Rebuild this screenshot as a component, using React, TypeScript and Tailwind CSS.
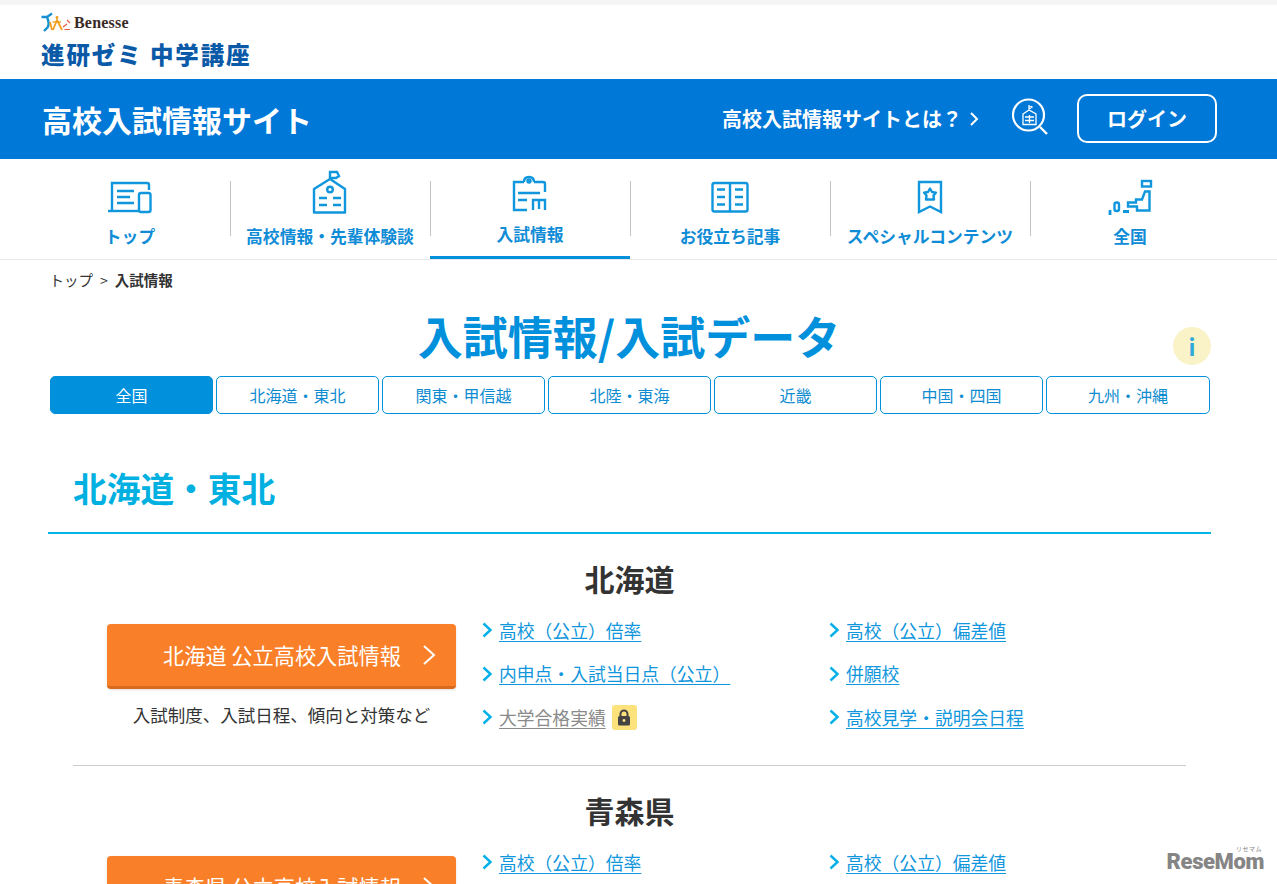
const FONT = "font-['Noto_Sans_CJK_JP','Noto_Sans',sans-serif]"

const tabs = ['全国', '北海道・東北', '関東・甲信越', '北陸・東海', '近畿', '中国・四国', '九州・沖縄']

function TopIcon() {
  return (
    <svg viewBox="106 179 48 36" className="w-[48px] h-[36px] fill-none stroke-[#0f96dc] stroke-[2.4]">
      <path d="M112 211V183H147Q149 183 149 185V190" />
      <path d="M108 211H139" />
      <rect x="139" y="193" width="11.5" height="19" rx="2" />
      <path d="M117 191H134M117 197H130M117 203H134" />
    </svg>
  )
}

function SchoolIcon() {
  return (
    <svg viewBox="310 170 40 45" className="w-[40px] h-[45px] fill-none stroke-[#0f96dc] stroke-[2.4]">
      <path d="M314 189L330 179L345 189V212.5H314Z" strokeLinejoin="round" />
      <path d="M330 179V172H337L339 176L336 178H330" />
      <circle cx="330" cy="189.5" r="2.8" />
      <path d="M319 198H327M333 198H341M319 205H327M333 205H341" />
    </svg>
  )
}

function ExamIcon() {
  return (
    <svg viewBox="510 174 40 41" className="w-[40px] h-[41px] fill-none stroke-[#0f96dc] stroke-[2.4]">
      <path d="M527 210H514V182H524M534 182H543Q545 182 545 184V192" />
      <path d="M524 182Q524 177 529 177Q534 177 534 182" />
      <circle cx="529" cy="181" r="1.500" />
      <path d="M518 193H540M518 200H527M533 210V200H545V210M539 200V209" />
    </svg>
  )
}

function BookIcon() {
  return (
    <svg viewBox="708 179 44 36" className="w-[44px] h-[36px] fill-none stroke-[#0f96dc] stroke-[2.4]">
      <rect x="712.5" y="183" width="35" height="28.5" rx="2" />
      <path d="M730 183V212M717 189.5H725M717 197H725M717 204.5H725M735 189.5H743M735 197H743M735 204.5H743" />
    </svg>
  )
}

function BookmarkIcon() {
  return (
    <svg viewBox="914 177 32 38" className="w-[32px] h-[38px] fill-none stroke-[#0f96dc] stroke-[2.4]">
      <path d="M919 182H941V212L930 206.5L919 212Z" />
      <path d="M930 188.500L932 192L936 192.600L933.500 195.600L934 199.500H926L926.500 195.600L924 192.600L928 192Z" strokeLinejoin="round" />
    </svg>
  )
}

function JapanIcon() {
  return (
    <svg viewBox="1106 177 48 38" className="w-[48px] h-[38px] fill-none stroke-[#0f96dc] stroke-[2.4]">
      <rect x="1142" y="181" width="9" height="5.500" />
      <path d="M1145 191.500H1149.500V210.500H1137V206.500H1128V202.500H1136V199.500H1142L1145 191.500Z" />
      <rect x="1114.500" y="202.500" width="4.500" height="8.500" rx="2" />
      <path d="M1123 211.500H1129M1110 210V215" strokeWidth="2.800" />
    </svg>
  )
}

function FinderIcon() {
  return (
    <svg viewBox="1010 97 40 44" className="w-[40px] h-[44px] fill-none stroke-white">
      <circle cx="1028.500" cy="115" r="15.500" strokeWidth="2.200" />
      <path d="M1040 127L1047 134" strokeWidth="2.400" />
      <path d="M1029 105V110M1029 105.500L1032 107L1029 109M1023 114L1029 110L1036 114V124.500H1023ZM1025 117H1034M1025 120.500H1034M1029.500 115V123" strokeWidth="1.300" />
    </svg>
  )
}

function BenesseMark() {
  return (
    <svg viewBox="0 0 30 20" className="w-[30px] h-[20px] fill-none">
      <path d="M0.500 5H6L11 1.500M6 5Q9 12 6.500 15.500L3 19" stroke="#1590d0" strokeWidth="2.400" />
      <path d="M9 10L11 18M12 18L16 8L21 18" stroke="#f0a020" strokeWidth="1.800" />
      <path d="M11.500 10H20" stroke="#f0a020" strokeWidth="1.400" />
      <circle cx="16" cy="5.500" r="1.400" fill="#f0a020" />
      <path d="M22 15L26 12M23.500 17.500H29M26 8L29 11" stroke="#e85a40" strokeWidth="1.200" />
    </svg>
  )
}

function LockBadge() {
  return (
    <span className="ml-[6px] w-[25px] h-[25px] rounded-[3px] bg-[#fbe27a] flex items-center justify-center">
      <svg viewBox="0 0 14 17" className="w-[14px] h-[17px]">
        <path d="M3.500 7V5A3.500 3.500 0 0 1 10.500 5V7" fill="none" stroke="#444" strokeWidth="2" />
        <rect x="1" y="7" width="12" height="9.500" rx="1.500" fill="#444" />
        <circle cx="7" cy="11.500" r="1.400" fill="#fbe27a" />
      </svg>
    </span>
  )
}

function LinkItem({ label, locked }: { label: string; locked?: boolean }) {
  return (
    <div className="flex items-center h-[43.5px]">
      <svg viewBox="0 0 11 16" className="w-[11px] h-[16px] shrink-0 -ml-[1px] mr-[6px] -mt-[1px] fill-none stroke-[#00b0e6] stroke-[2.4]">
        <path d="M1.500 1.500L8.500 8L1.500 14.500" />
      </svg>
      <a className={`text-[17.800px] leading-none underline underline-offset-[3px] ${locked ? 'text-[#8a8a8a]' : 'text-[#0f96dc]'}`}>{label}</a>
      {locked && <LockBadge />}
    </div>
  )
}

function Prefecture({ name, links }: { name: string; links: { label: string; locked?: boolean }[] }) {
  return (
    <section className="ml-[25px] w-[1113px] border-b border-[#cccccc] h-[232px]">
      <h3 className="h-[90px] pt-[25px] text-center text-[30px] leading-[38px] font-bold text-[#333333]">{name}</h3>
      <div className="flex">
        <div className="ml-[34px] w-[349px]">
          <a className="flex items-center justify-between h-[65px] pl-[56px] pr-[20px] rounded-[4px] bg-[#f98028] border-b-[3px] border-[#d96a1c] text-white text-[21.200px] shadow-sm">
            {name} 公立高校入試情報
            <svg viewBox="0 0 14 22" className="w-[14px] h-[22px] fill-none stroke-white stroke-2">
              <path d="M2 2L12 11L2 20" />
            </svg>
          </a>
          <p className="mt-[14px] text-center text-[17.500px] leading-[24px] text-[#333333]">入試制度、入試日程、傾向と対策など</p>
        </div>
        <div className="ml-[27px] -mt-[15px] grid grid-cols-[347px_347px] content-start">
          {links.map(l => <LinkItem key={l.label} {...l} />)}
        </div>
      </div>
    </section>
  )
}

const links = [
  { label: '高校（公立）倍率' },
  { label: '高校（公立）偏差値' },
  { label: '内申点・入試当日点（公立）' },
  { label: '併願校' },
  { label: '大学合格実績', locked: true },
  { label: '高校見学・説明会日程' },
]

export default function App() {
  const nav = [
    { label: '高校情報・先輩体験談', icon: <SchoolIcon /> },
    { label: '入試情報', icon: <ExamIcon />, active: true },
    { label: 'お役立ち記事', icon: <BookIcon /> },
    { label: 'スペシャルコンテンツ', icon: <BookmarkIcon /> },
    { label: '全国', icon: <JapanIcon /> },
  ]

  return (
    <div className={`relative h-[884px] overflow-hidden bg-white ${FONT}`}>
      <div className="h-[5px] bg-[#f5f5f5]" />

      {/* Brand */}
      <header className="h-[74px] pl-[41px] pt-[7px]">
        <div className="flex items-center gap-[3px] h-[20px]">
          <BenesseMark />
          <span className="mt-[2px] font-['Liberation_Serif',serif] font-bold text-[16px] tracking-[0.2px] leading-none text-[#3a2a25]">Benesse</span>
        </div>
        <p className="mt-[7px] text-[23.500px] leading-[30px] font-black tracking-[1.900px] text-[#0a5aa8]">進研ゼミ 中学講座</p>
      </header>

      {/* Blue bar */}
      <div className="h-[80px] bg-[#0078d7] flex items-center pl-[42px] pr-[60px] text-white">
        <p className="text-[30px] font-bold leading-none">高校入試情報サイト</p>
        <a className="ml-auto flex items-center text-[20px] font-bold">
          高校入試情報サイトとは？
          <svg viewBox="0 0 10 16" className="ml-[7px] w-[10px] h-[16px] fill-none stroke-white stroke-2">
            <path d="M2 2L8 8L2 14" />
          </svg>
        </a>
        <span className="ml-[31px] flex"><FinderIcon /></span>
        <button className="ml-[27px] -mt-[1px] w-[140px] h-[49px] border-2 border-white rounded-[10px] text-[20px] font-bold">ログイン</button>
      </div>

      {/* Main nav */}
      <nav className="h-[101px] border-b border-[#e8e8e8] pl-[30px] flex">
        <NavItem label="トップ" icon={<TopIcon />} first />
        {nav.map(n => <NavItem key={n.label} {...n} />)}
      </nav>

      <p className="h-[42px] pl-[49.500px] pt-[9px] text-[14.500px] leading-[22px] text-[#333333]">
        トップ<span className="mx-[7px] text-[14px]">&gt;</span><b>入試情報</b>
      </p>

      <div className="relative h-[74px] pr-[19px]">
        <h1 className="text-center text-[45px] leading-[68px] font-bold text-[#0090dc]">入試情報/入試データ</h1>
        <span className="absolute left-[1173px] top-[25px] w-[38px] h-[38px] rounded-full bg-[#fbf3c8] flex items-center justify-center text-[23px] font-bold text-[#2fa8dc]">i</span>
      </div>

      <div className="ml-[50px] flex gap-[3px]">
        {tabs.map((t, i) => (
          <a
            key={t}
            className={`${i === 6 ? 'w-[164px]' : 'w-[163px]'} h-[38px] rounded-[5px] border border-[#0090dc] flex items-center justify-center text-[16px] ${i === 0 ? 'bg-[#0090dc] text-white' : 'text-[#0f8cd0]'}`}
          >
            {t}
          </a>
        ))}
      </div>

      <div className="ml-[48px] w-[1163px] mt-[46px]">
        <h2 className="h-[74px] pl-[25px] border-b-2 border-[#00b4e6] text-[33.700px] leading-[56px] font-bold text-[#00b0e0]">北海道・東北</h2>
        <Prefecture name="北海道" links={links} />
        <Prefecture name="青森県" links={links} />
      </div>

      {/* watermark */}
      <div className="absolute right-[13px] bottom-[14px] flex flex-col items-end gap-[1px] text-[#858585]">
        <span className="text-[6px] leading-[6px] tracking-[0.5px] pr-[2px]">リセマム</span>
        <span className="font-['Roboto',sans-serif] font-black text-[22px] leading-[17px] tracking-[-0.4px]">ReseMom</span>
      </div>
    </div>
  )
}

function NavItem({ label, icon, active, first }: { label: string; icon: React.ReactNode; active?: boolean; first?: boolean }) {
  return (
    <a className={`relative w-[200px] h-[100px] flex flex-col items-center text-[#0f8cd6] font-bold text-[16.800px] ${active ? 'border-b-[3px] border-[#0090dc]' : ''}`}>
      <span className="h-[56px] flex items-end justify-center">{icon}</span>
      <span className={`leading-[24px] ${active ? 'mt-[7px]' : 'mt-[9px]'}`}>{label}</span>
      {!first && <span className="absolute left-0 top-[22px] h-[55px] w-px bg-[#c4c4c4]" />}
    </a>
  )
}
